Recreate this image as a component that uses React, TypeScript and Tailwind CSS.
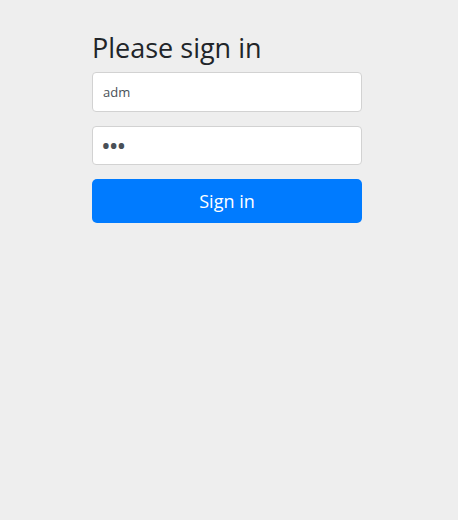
import React from "react";

export default function App() {
  return (
    <div className="min-h-[520px] w-full bg-[#eeeeee] font-['Open_Sans','Noto_Sans',sans-serif]">
      <form className="ml-[92px] w-[270px] pt-[31px]" onSubmit={(e) => e.preventDefault()}>
        <h2 className="mb-[7px] text-[27px] leading-[34px] font-normal text-[#212529]">Please sign in</h2>
        <input
          type="text"
          defaultValue="adm"
          className="block h-[40px] w-full rounded-[4px] border border-[#d2d2d2] bg-white px-[10px] text-[13px] text-[#495057] outline-none"
        />
        <input
          type="password"
          defaultValue="abc"
          className="mt-[14px] block h-[39px] w-full rounded-[4px] border border-[#d2d2d2] bg-white px-[8px] text-[26px] tracking-[-2px] text-[#495057] outline-none"
        />
        <button
          type="submit"
          className="mt-[14px] block h-[44px] w-full rounded-[5px] bg-[#007bff] text-[18px] text-white"
        >
          Sign in
        </button>
      </form>
    </div>
  );
}
